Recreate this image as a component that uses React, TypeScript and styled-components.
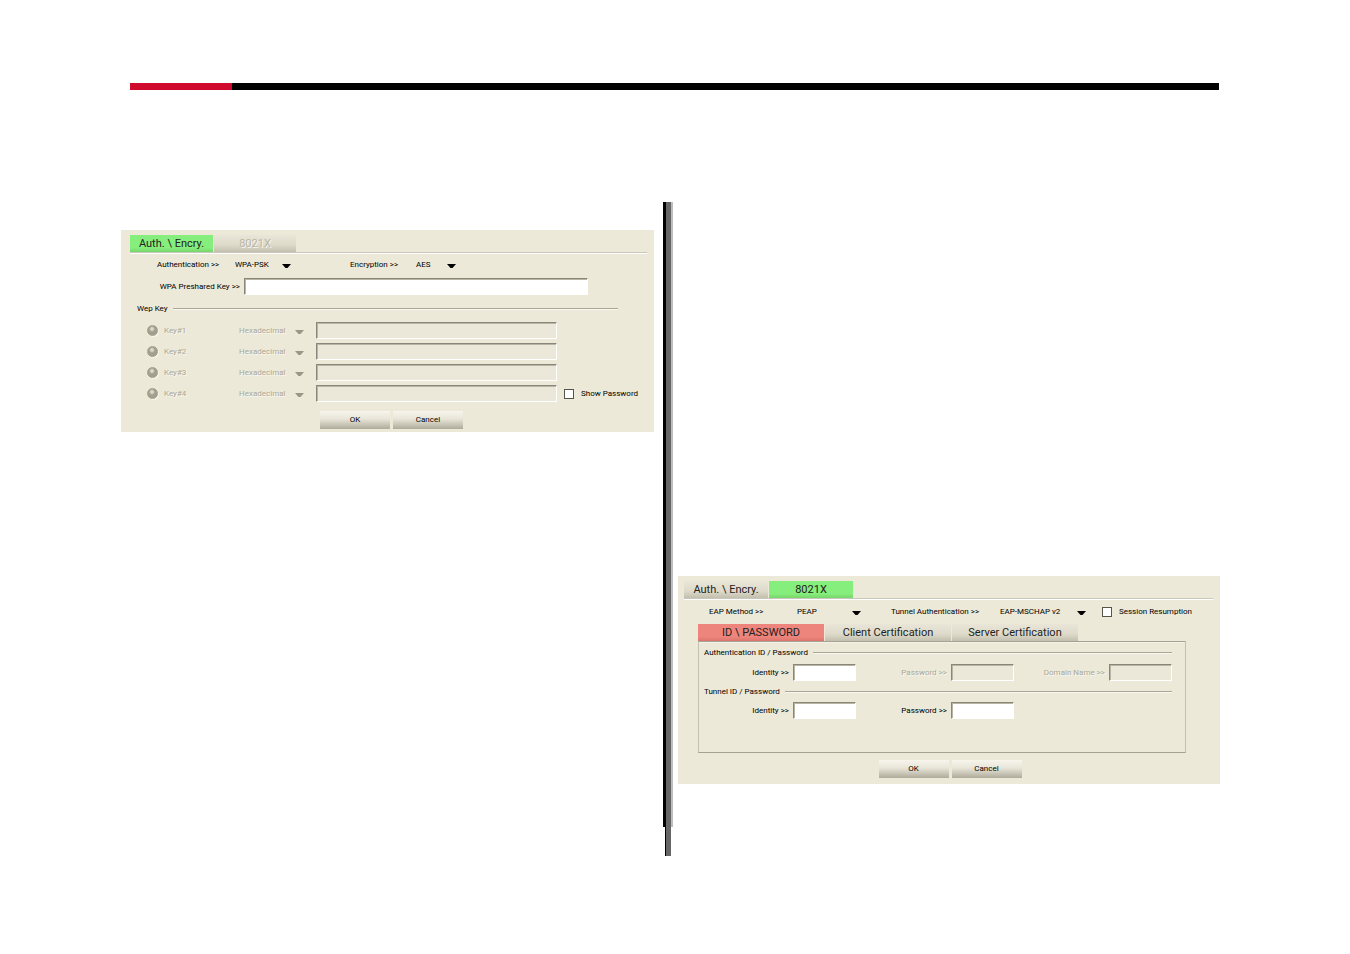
import React from "react";
import styled, { createGlobalStyle, css } from "styled-components";

const GlobalStyle = createGlobalStyle`
  *, *::before, *::after { box-sizing: border-box; }
  body {
    margin: 0;
    background: #fff;
    color: #000;
    font-family: Roboto, "Liberation Sans", sans-serif;
    font-size: 8px;
    line-height: 12px;
  }
  input, select, button { font: inherit; color: inherit; margin: 0; border-radius: 0; }
`;

const Page = styled.main`
  padding: 83px 130px 98px 121px;
`;

const HeaderRule = styled.div`
  display: flex;
  height: 7px;
  margin: 0 1px 112px 9px;
  background: #000;
`;

const HeaderAccent = styled.div`
  width: 102px;
  background: #cf0a2c;
`;

const Columns = styled.div`
  display: grid;
  grid-template-columns: minmax(0, 533fr) 24px minmax(0, 542fr);
`;

const Column = styled.section<{ $top: number; $bottom?: number }>`
  padding-top: ${(p) => p.$top}px;
  padding-bottom: ${(p) => p.$bottom ?? 0}px;
`;

const Divider = styled.div`
  display: flex;
  flex-direction: column;
  margin: 0 5px 0 9px;
`;

const DividerBody = styled.div`
  flex: 1;
  background: #666;
  border-left: 3px solid #000;
  border-right: 2px solid #bdbdbd;
`;

const DividerStem = styled.div`
  height: 29px;
  margin: 0 2px;
  background: #666;
  border-left: 1px solid #000;
`;

const Panel = styled.form<{ $bottom: number }>`
  padding: 5px 0 ${(p) => p.$bottom}px;
  background: #ece9d8;
`;

const TabBar = styled.div<{ $left: number }>`
  display: flex;
  gap: 1px;
  margin: 0 7px 1px ${(p) => p.$left}px;
  border-bottom: 1px solid #c9c7ba;
  box-shadow: 0 1px #fff;
`;

const SubTabBar = styled.div`
  display: flex;
  gap: 1px;
  margin-left: 20px;
`;

const tabFill = {
  plain: "linear-gradient(#e9e6d8, #dddaca 60%, #c2bfae)",
  green: "linear-gradient(#86ee7c, #86ee7c 75%, #77d46c)",
  red: "linear-gradient(#ee857c, #ee857c 75%, #dd756c)",
};

const Tab = styled.button<{ $width: number; $tone?: keyof typeof tabFill }>`
  width: ${(p) => p.$width}px;
  height: 17px;
  padding: 0;
  border: 0;
  background: ${(p) => tabFill[p.$tone ?? "plain"]};
  font-size: 11px;
  line-height: 17px;
  color: #222;
  white-space: nowrap;
  &:disabled {
    color: #b9b6a6;
    text-shadow: 1px 1px #f7f6ee;
  }
`;

const faded = css`
  color: #aaa797;
  text-shadow: 1px 1px #f9f8f1;
`;

const Row = styled.div<{ $columns: string; $left: number; $height: number }>`
  display: grid;
  grid-template-columns: ${(p) => p.$columns};
  align-items: center;
  height: ${(p) => p.$height}px;
  padding-left: ${(p) => p.$left}px;
  white-space: nowrap;
`;

const Label = styled.label<{ $disabled?: boolean }>`
  ${(p) => p.$disabled && faded}
`;

const SelectBox = styled.span<{ $width: number; $disabled?: boolean }>`
  position: relative;
  width: ${(p) => p.$width}px;
  height: 14px;
  color: ${(p) => (p.$disabled ? "#9a9787" : "#000")};
`;

const SelectInput = styled.select`
  display: block;
  appearance: none;
  width: 100%;
  height: 14px;
  padding: 0;
  border: 0;
  background: transparent;
  color: #000;
  &:disabled {
    opacity: 1;
    ${faded}
  }
`;

const SelectArrow = styled.svg`
  position: absolute;
  right: 0;
  top: 6px;
  pointer-events: none;
`;

const TextInput = styled.input`
  display: block;
  width: 100%;
  min-width: 0;
  height: 17px;
  padding: 0 3px;
  border: 1px solid;
  border-color: #8a877a #fff #fff #8a877a;
  box-shadow: inset 1px 1px #b8b5a5;
  outline: 0;
  background: #fff;
  &:disabled { background: #ebe8d9; }
`;

const KeyRow = styled.div`
  display: grid;
  grid-template-columns: 119px minmax(0, 1fr);
  column-gap: 4px;
  align-items: center;
  margin-top: 2px;
  padding-right: 66px;
  text-align: right;
  white-space: nowrap;
`;

const Legend = styled.div<{ $height: number; $left: number; $right: number }>`
  display: flex;
  align-items: center;
  gap: 5px;
  height: ${(p) => p.$height}px;
  padding: 0 ${(p) => p.$right}px 0 ${(p) => p.$left}px;
  white-space: nowrap;
  &::after {
    content: "";
    flex: 1;
    height: 2px;
    background: linear-gradient(#aaa797 50%, #f8f7f0 50%);
  }
`;

const KeyList = styled.div`
  display: grid;
  gap: 4px;
`;

const Radio = styled.input`
  appearance: none;
  width: 11px;
  height: 11px;
  border-radius: 50%;
  background: radial-gradient(circle at 4px 3px, #dedbcc 0 1px, #a39f8f 3px);
  border: 1px solid #a39f8f;
  box-shadow: 1px 1px #f7f5ea;
`;

const Check = styled.label<{ $left?: number }>`
  display: flex;
  align-items: center;
  gap: 7px;
  padding-left: ${(p) => p.$left ?? 0}px;
`;

const CheckBox = styled.input`
  appearance: none;
  flex: none;
  width: 10px;
  height: 10px;
  border: 1px solid #55544d;
  background: #fff;
  &:checked { background: #55544d; }
`;

const TabPanel = styled.div`
  margin: 0 34px 0 20px;
  padding-bottom: 33px;
  border: 1px solid #c3c1b5;
  border-top-color: #a5a293;
  border-bottom-color: #a5a293;
  box-shadow: inset 0 1px #f4f2e6;
`;

const FieldRow = styled.div`
  display: flex;
  gap: 1px;
  white-space: nowrap;
`;

const Field = styled.div`
  display: grid;
  grid-template-columns: 90px 63px;
  gap: 4px;
  align-items: center;
  text-align: right;
`;

const Actions = styled.div<{ $top: number; $left: number }>`
  display: flex;
  justify-content: center;
  gap: 3px;
  padding: ${(p) => p.$top}px 0 0 ${(p) => p.$left}px;
`;

const ActionButton = styled.button`
  width: 70px;
  height: 18px;
  padding: 0;
  border: 0;
  background: linear-gradient(#f7f5ec, #e8e5d8 45%, #aeab9b);
`;

function Select({ id, value, width, disabled, label }: {
  id: string; value: string; width: number; disabled?: boolean; label?: string;
}) {
  return (
    <SelectBox $width={width} $disabled={disabled}>
      <SelectInput id={id} disabled={disabled} aria-label={label}>
        <option>{value}</option>
      </SelectInput>
      <SelectArrow width="9" height="4" viewBox="0 0 9 4" aria-hidden="true">
        <path d="M0 0H9L5.5 4H3.5Z" fill="currentColor" />
      </SelectArrow>
    </SelectBox>
  );
}

function LabeledField({ id, label, disabled }: { id: string; label: string; disabled?: boolean }) {
  return (
    <Field>
      <Label htmlFor={id} $disabled={disabled}>{label} &gt;&gt;</Label>
      <TextInput id={id} disabled={disabled} />
    </Field>
  );
}

function EncryptionPanel() {
  return (
    <Panel $bottom={3}>
      <TabBar $left={9}>
        <Tab type="button" $width={83} $tone="green">Auth. \ Encry.</Tab>
        <Tab type="button" $width={82} disabled>8021X</Tab>
      </TabBar>
      <Row $columns="78px 115px 66px 1fr" $left={36} $height={22}>
        <Label htmlFor="auth">Authentication &gt;&gt;</Label>
        <Select id="auth" value="WPA-PSK" width={56} />
        <Label htmlFor="encryption">Encryption &gt;&gt;</Label>
        <Select id="encryption" value="AES" width={40} />
      </Row>
      <KeyRow>
        <Label htmlFor="psk">WPA Preshared Key &gt;&gt;</Label>
        <TextInput id="psk" />
      </KeyRow>
      <Legend $height={27} $left={16} $right={36}>Wep Key</Legend>
      <KeyList>
        {[1, 2, 3, 4].map((n) => (
          <Row key={n} $columns="17px 75px 77px minmax(0, 1fr) 97px" $left={26} $height={17}>
            <Radio type="radio" name="wep" id={`key${n}`} disabled />
            <Label htmlFor={`key${n}`} $disabled>Key#{n}</Label>
            <Select id={`format${n}`} value="Hexadecimal" width={65} disabled label={`Key ${n} format`} />
            <TextInput disabled aria-label={`Key ${n} value`} />
            {n === 4 && (
              <Check $left={7}>
                <CheckBox type="checkbox" />
                Show Password
              </Check>
            )}
          </Row>
        ))}
      </KeyList>
      <Actions $top={9} $left={8}>
        <ActionButton type="button">OK</ActionButton>
        <ActionButton type="button">Cancel</ActionButton>
      </Actions>
    </Panel>
  );
}

function EapPanel() {
  return (
    <Panel $bottom={6}>
      <TabBar $left={6}>
        <Tab type="button" $width={84}>Auth. \ Encry.</Tab>
        <Tab type="button" $width={84} $tone="green">8021X</Tab>
      </TabBar>
      <Row $columns="88px 94px 109px 102px 1fr" $left={31} $height={24}>
        <Label htmlFor="eap">EAP Method &gt;&gt;</Label>
        <Select id="eap" value="PEAP" width={64} />
        <Label htmlFor="tunnel">Tunnel Authentication &gt;&gt;</Label>
        <Select id="tunnel" value="EAP-MSCHAP v2" width={86} />
        <Check>
          <CheckBox type="checkbox" />
          Session Resumption
        </Check>
      </Row>
      <SubTabBar>
        <Tab type="button" $width={126} $tone="red">ID \ PASSWORD</Tab>
        <Tab type="button" $width={126}>Client Certification</Tab>
        <Tab type="button" $width={126}>Server Certification</Tab>
      </SubTabBar>
      <TabPanel>
        <Legend $height={22} $left={5} $right={13}>Authentication ID / Password</Legend>
        <FieldRow>
          <LabeledField id="auth-id" label="Identity" />
          <LabeledField id="auth-password" label="Password" disabled />
          <LabeledField id="domain" label="Domain Name" disabled />
        </FieldRow>
        <Legend $height={21} $left={5} $right={13}>Tunnel ID / Password</Legend>
        <FieldRow>
          <LabeledField id="tunnel-id" label="Identity" />
          <LabeledField id="tunnel-password" label="Password" />
        </FieldRow>
      </TabPanel>
      <Actions $top={7} $left={2}>
        <ActionButton type="button">OK</ActionButton>
        <ActionButton type="button">Cancel</ActionButton>
      </Actions>
    </Panel>
  );
}

export default function App() {
  return (
    <>
      <GlobalStyle />
      <Page>
        <HeaderRule>
          <HeaderAccent />
        </HeaderRule>
        <Columns>
          <Column $top={28}>
            <EncryptionPanel />
          </Column>
          <Divider>
            <DividerBody />
            <DividerStem />
          </Divider>
          <Column $top={374} $bottom={72}>
            <EapPanel />
          </Column>
        </Columns>
      </Page>
    </>
  );
}
